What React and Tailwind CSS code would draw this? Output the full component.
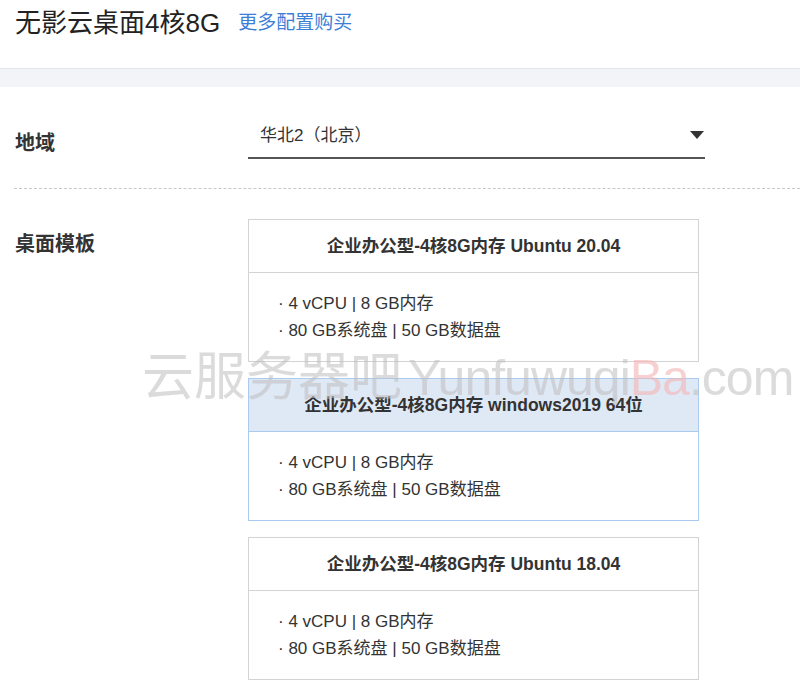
import React from "react";

const font = { fontFamily: '"Liberation Sans", "Noto Sans CJK SC", sans-serif' };

const templates = [
  { name: "企业办公型-4核8G内存 Ubuntu 20.04", active: false },
  { name: "企业办公型-4核8G内存 windows2019 64位", active: true },
  { name: "企业办公型-4核8G内存 Ubuntu 18.04", active: false },
];

function TemplateCard({ name, active }) {
  return (
    <div
      className={`w-[451px] h-[143px] border flex flex-col ${
        active ? "border-[#a9cbef]" : "border-[#d3d3d3]"
      }`}
    >
      <div
        className={`h-[53px] flex items-center justify-center border-b text-[17.5px] font-bold text-[#333] ${
          active ? "bg-[#dfe8f5] border-[#a9cbef]" : "bg-white border-[#d3d3d3]"
        }`}
      >
        {name}
      </div>
      <div className="flex-1 pl-[29px] pt-[17px] text-[17px] text-[#333] leading-[27px]">
        <div>· 4 vCPU | 8 GB内存</div>
        <div>· 80 GB系统盘 | 50 GB数据盘</div>
      </div>
    </div>
  );
}

export default function App() {
  return (
    <div className="relative w-[800px] h-[689px] bg-white overflow-hidden" style={font}>
      <div className="h-[68px] flex items-start pt-[7px] pl-[15px] gap-[18px]">
        <h1 className="text-[26px] text-[#222] leading-[32px]">无影云桌面4核8G</h1>
        <a className="text-[19px] text-[#3b7ed8] leading-[32px]">更多配置购买</a>
      </div>
      <div className="h-[19px] bg-[#f2f4f7] border-t border-[#dfe6ec]" />

      <div className="flex items-center h-[101px] pl-[15px]">
        <div className="w-[233px] text-[20px] font-semibold text-[#333] mt-[10px]">地域</div>
        <div className="w-[457px] h-[47px] mt-[-4px] border-b-2 border-[#555] flex items-center justify-between pl-[12px]">
          <span className="text-[17px] text-[#333] mt-[2px]">华北2（北京）</span>
          <svg width="14" height="8" viewBox="0 0 14 8" className="mr-[1px]">
            <path d="M0 0 L14 0 L7 8 Z" fill="#333" />
          </svg>
        </div>
      </div>

      <div className="ml-[14px] border-t border-dashed border-[#c8c8c8]" />

      <div className="flex pl-[15px] pt-[30px]">
        <div className="w-[233px] text-[20px] font-semibold text-[#333] pt-[10px]">桌面模板</div>
        <div className="flex flex-col gap-[16px]">
          {templates.map((t) => (
            <TemplateCard key={t.name} {...t} />
          ))}
        </div>
      </div>

      <div className="absolute left-[142px] top-[344px] flex items-baseline whitespace-nowrap pointer-events-none select-none leading-[66px]">
        <span className="text-[52px] text-[#bdbdbd]/55">云服务器吧</span>
        <span className="text-[50px] tracking-[-1px] text-[#bdbdbd]/55 ml-[6px]">Yunfuwuqi</span>
        <span className="text-[50px] tracking-[-1px] text-[#f2b8b8]/65">Ba</span>
        <span className="text-[50px] tracking-[-1px] text-[#bdbdbd]/55">.com</span>
      </div>
    </div>
  );
}
